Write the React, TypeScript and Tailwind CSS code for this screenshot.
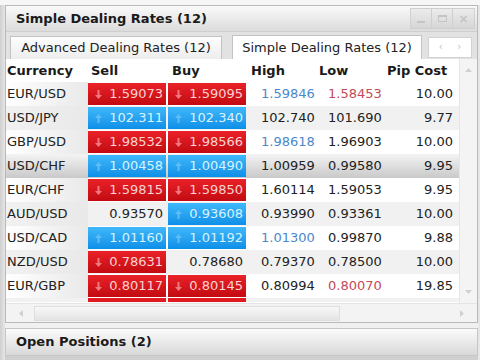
import React from "react";

type Cell = { v: string; c: "r" | "b" | "n" };
type Row = { cur: string; sell: Cell; buy: Cell; high: string; hc?: string; low: string; lc?: string; pip: string; sel?: boolean };

const rows: Row[] = [
  { cur: "EUR/USD", sell: { v: "1.59073", c: "r" }, buy: { v: "1.59095", c: "r" }, high: "1.59846", hc: "b", low: "1.58453", lc: "r", pip: "10.00" },
  { cur: "USD/JPY", sell: { v: "102.311", c: "b" }, buy: { v: "102.340", c: "b" }, high: "102.740", low: "101.690", pip: "9.77" },
  { cur: "GBP/USD", sell: { v: "1.98532", c: "r" }, buy: { v: "1.98566", c: "r" }, high: "1.98618", hc: "b", low: "1.96903", pip: "10.00" },
  { cur: "USD/CHF", sell: { v: "1.00458", c: "b" }, buy: { v: "1.00490", c: "b" }, high: "1.00959", low: "0.99580", pip: "9.95", sel: true },
  { cur: "EUR/CHF", sell: { v: "1.59815", c: "r" }, buy: { v: "1.59850", c: "r" }, high: "1.60114", low: "1.59053", pip: "9.95" },
  { cur: "AUD/USD", sell: { v: "0.93570", c: "n" }, buy: { v: "0.93608", c: "b" }, high: "0.93990", low: "0.93361", pip: "10.00" },
  { cur: "USD/CAD", sell: { v: "1.01160", c: "b" }, buy: { v: "1.01192", c: "b" }, high: "1.01300", hc: "b", low: "0.99870", pip: "9.88" },
  { cur: "NZD/USD", sell: { v: "0.78631", c: "r" }, buy: { v: "0.78680", c: "n" }, high: "0.79370", low: "0.78500", pip: "10.00" },
  { cur: "EUR/GBP", sell: { v: "0.80117", c: "r" }, buy: { v: "0.80145", c: "r" }, high: "0.80994", low: "0.80070", lc: "r", pip: "19.85" },
];

function Arrow({ up, color }: { up: boolean; color: string }) {
  return (
    <svg width="7" height="9" viewBox="0 0 7 9" className="shrink-0">
      {up ? (
        <path d="M3.5 0 L7 4 L4.5 4 L4.5 9 L2.5 9 L2.5 4 L0 4 Z" fill={color} />
      ) : (
        <path d="M3.5 9 L7 5 L4.5 5 L4.5 0 L2.5 0 L2.5 5 L0 5 Z" fill={color} />
      )}
    </svg>
  );
}

function PriceCell({ cell }: { cell: Cell }) {
  if (cell.c === "r") {
    return (
      <div className="mr-[2px] h-[22px] flex items-center justify-between pl-[7px] pr-[3px] bg-gradient-to-b from-[#ea2128] to-[#c20a10] text-[#fbd2d2]">
        <Arrow up={false} color="#f07a7e" />
        <span>{cell.v}</span>
      </div>
    );
  }
  if (cell.c === "b") {
    return (
      <div className="mr-[2px] h-[22px] flex items-center justify-between pl-[7px] pr-[3px] bg-gradient-to-b from-[#3fb8fa] to-[#0b8fe8] text-[#d6f3ff]">
        <Arrow up={true} color="#5cc0f6" />
        <span>{cell.v}</span>
      </div>
    );
  }
  return (
    <div className="mr-[2px] h-[22px] flex items-center justify-end pr-[3px] text-[#222]">
      <span>{cell.v}</span>
    </div>
  );
}

function DataRow({ r, i }: { r: Row; i: number }) {
  const bg = r.sel
    ? "bg-gradient-to-b from-[#f4f4f4] to-[#c9c9c9]"
    : i % 2 === 0
    ? "bg-white"
    : "bg-[#f1f1f1]";
  return (
    <div className={`grid grid-cols-[82px_80px_80px_68px_68px_72px] h-[24px] items-center ${bg}`}>
      <div className={`pl-[1px] h-[24px] flex items-center ${r.sel ? "" : "bg-gradient-to-r from-transparent to-[#e9e9e9]"}`}>{r.cur}</div>
      <PriceCell cell={r.sell} />
      <PriceCell cell={r.buy} />
      <div className={`pl-[13px] ${r.hc === "b" ? "text-[#4a88cc]" : ""}`}>{r.high}</div>
      <div className={`pl-[12px] ${r.lc === "r" ? "text-[#c44a58]" : ""}`}>{r.low}</div>
      <div className="text-right pr-[3px]">{r.pip}</div>
    </div>
  );
}

export default function App() {
  return (
    <div
      className="w-[480px] h-[360px] overflow-hidden bg-[#e4e4e4] flex flex-col text-[13px] text-[#222]"
      style={{ fontFamily: '"DejaVu Sans", Verdana, sans-serif' }}
    >
      <div className="h-[5px] bg-[#f6f6f6] shrink-0" />
      <div className="flex flex-1 min-h-0">
        <div className="w-[5px] bg-gradient-to-r from-[#cfcfcf] to-[#e6e6e6] shrink-0" />
        <div className="flex-1 flex flex-col min-w-0">
          {/* main panel */}
          <div className="h-[318px] shrink-0 border border-[#b9b9b9] bg-[#ececec] flex flex-col">
            {/* title bar */}
            <div className="h-[26px] flex items-center justify-between bg-gradient-to-b from-[#fafafa] to-[#dcdcdc] border-b border-[#cfcfcf]">
              <span className="pl-[10px] font-bold text-[13px] text-[#1a1a1a]">Simple Dealing Rates (12)</span>
              <div className="flex mr-[2px] h-[21px]">
                <div className="w-[22px] border border-[#cfcfcf] bg-gradient-to-b from-[#ececec] to-[#d6d6d6] flex items-end justify-center pb-[5px]">
                  <div className="w-[8px] h-[2px] bg-[#c4c4c4]" />
                </div>
                <div className="w-[21px] border-y border-r border-[#cfcfcf] bg-gradient-to-b from-[#ececec] to-[#d6d6d6] flex items-center justify-center">
                  <div className="w-[9px] h-[7px] border border-[#c4c4c4] border-t-2" />
                </div>
                <div className="w-[22px] border-y border-r border-[#cfcfcf] bg-gradient-to-b from-[#ececec] to-[#d6d6d6] flex items-center justify-center text-[#c4c4c4] text-[12px] font-bold">×</div>
              </div>
            </div>
            {/* tabs */}
            <div className="h-[27px] flex items-end pl-[4px] pr-[4px] gap-[10px] bg-[#e2e2e2]">
              <div className="w-[212px] h-[23px] border border-b-0 border-[#c3c3c3] bg-gradient-to-b from-[#fdfdfd] to-[#ededed] flex items-center justify-center text-[#222]">
                Advanced Dealing Rates (12)
              </div>
              <div className="w-[190px] h-[24px] border border-b-0 border-[#c3c3c3] bg-white flex items-center justify-center text-[#222]">
                Simple Dealing Rates (12)
              </div>
              <div className="ml-[-4px] w-[44px] h-[21px] mb-[1px] border border-[#d2d2d2] bg-white flex items-center justify-center gap-[14px] text-[#c8c8c8] text-[11px]">
                <span>‹</span>
                <span>›</span>
              </div>
            </div>
            {/* table area */}
            <div className="flex-1 flex flex-col bg-white min-h-0">
              <div className="flex flex-1 min-h-0">
                <div className="flex-1 flex flex-col min-w-0">
                  <div className="grid grid-cols-[82px_80px_80px_68px_68px_72px] h-[23px] items-center font-bold text-[#1a1a1a] bg-white shrink-0">
                    <div className="pl-[1px]">Currency</div>
                    <div className="pl-[3px]">Sell</div>
                    <div className="pl-[4px]">Buy</div>
                    <div className="pl-[3px]">High</div>
                    <div className="pl-[3px]">Low</div>
                    <div className="pl-[3px]">Pip Cost</div>
                  </div>
                  <div className="h-[220px] overflow-hidden">
                    {rows.map((r, i) => (
                      <DataRow key={i} r={r} i={i} />
                    ))}
                    <div className="grid grid-cols-[82px_80px_80px_68px_68px_72px] h-[4px] bg-[#f1f1f1]">
                      <div />
                      <div className="mr-[2px] bg-[#e11a21]" />
                      <div className="mr-[2px] bg-[#e11a21]" />
                    </div>
                  </div>
                </div>
                <div className="w-[18px] bg-[#f4f4f4] border-l border-[#e6e6e6] flex flex-col items-center justify-between py-[9px]">
                  <svg width="7" height="4" viewBox="0 0 7 4"><path d="M0 4 L3.5 0 L7 4 Z" fill="#d0d0d0" /></svg>
                  <svg width="7" height="4" viewBox="0 0 7 4"><path d="M0 0 L3.5 4 L7 0 Z" fill="#d0d0d0" /></svg>
                </div>
              </div>
              {/* horizontal scrollbar */}
              <div className="h-[19px] shrink-0 flex items-center bg-[#f3f3f3] border-t border-[#e4e4e4] px-[2px]">
                <div className="w-[26px] flex justify-center">
                  <svg width="4" height="7" viewBox="0 0 4 7"><path d="M4 0 L0 3.5 L4 7 Z" fill="#d0d0d0" /></svg>
                </div>
                <div className="w-[306px] h-[15px] bg-gradient-to-b from-[#f8f8f8] to-[#e4e4e4] border border-[#dedede]" />
                <div className="flex-1" />
                <div className="w-[26px] flex justify-center">
                  <svg width="4" height="7" viewBox="0 0 4 7"><path d="M0 0 L4 3.5 L0 7 Z" fill="#d0d0d0" /></svg>
                </div>
              </div>
            </div>
          </div>
          <div className="h-[5px] shrink-0 bg-[#f0f0f0]" />
          {/* open positions */}
          <div className="h-[28px] shrink-0 border border-[#c6c6c6] bg-gradient-to-b from-[#fbfbfb] to-[#d9d9d9] flex items-center">
            <span className="pl-[10px] font-bold text-[#1a1a1a]">Open Positions (2)</span>
          </div>
          <div className="flex-1 bg-[#cfcfcf]" />
        </div>
        <div className="w-[2px] bg-[#e6e6e6] shrink-0" />
      </div>
    </div>
  );
}
